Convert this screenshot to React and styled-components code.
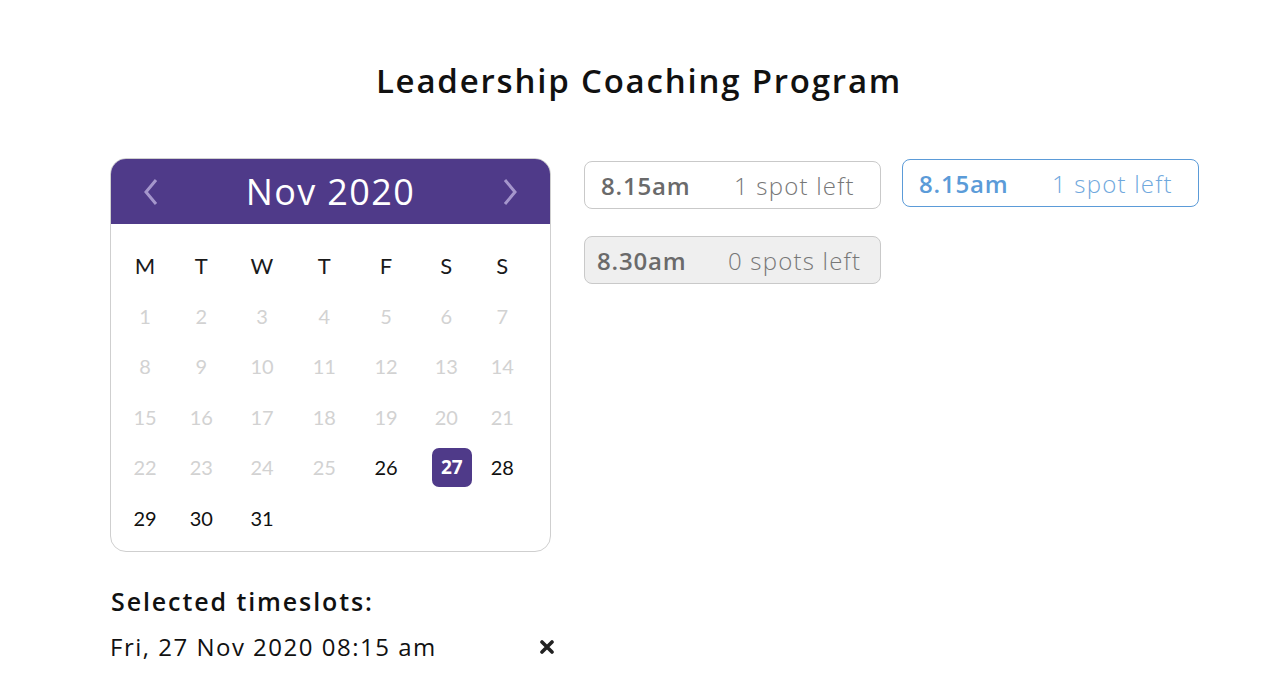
import React from 'react';
import styled, { createGlobalStyle } from 'styled-components';

const GlobalStyle = createGlobalStyle`
  body {
    margin: 0;
    background: #ffffff;
    font-family: 'Open Sans', 'Liberation Sans', sans-serif;
  }
`;

const Page = styled.main`
  width: 1271px;
  height: 696px;
  box-sizing: border-box;
  padding: 58px 0 0 110px;
`;

const Title = styled.h1`
  margin: 0 0 54px 0;
  width: 1058px;
  text-align: center;
  font-family: 'Open Sans', sans-serif;
  font-weight: 600;
  font-size: 33px;
  line-height: 46px;
  color: #111;
  letter-spacing: 1.8px;
`;

const Body = styled.div`
  display: flex;
  align-items: flex-start;
  column-gap: 33px;
`;

const LeftCol = styled.div`
  display: flex;
  flex-direction: column;
  width: 441px;
`;

const Calendar = styled.section`
  width: 441px;
  box-sizing: border-box;
  border: 1px solid #cfcfcf;
  border-radius: 16px;
  overflow: hidden;
  padding-bottom: 8px;
`;

const CalHeader = styled.header`
  display: flex;
  align-items: center;
  justify-content: space-between;
  height: 65px;
  padding: 0 30px;
  background: #4f3a89;
  color: #fff;
`;

const MonthLabel = styled.span`
  font-family: 'Open Sans', sans-serif;
  font-weight: 500;
  font-size: 36px;
  letter-spacing: 1.4px;
`;

const Chevron = styled.svg`
  width: 20px;
  height: 32px;
  stroke: #a596cc;
  stroke-width: 3;
  fill: none;
`;

const Grid = styled.div`
  display: grid;
  grid-template-columns: 54px 58.5px 63px 61.5px 62px 58.5px 53.5px;
  grid-auto-rows: 50.5px;
  padding: 16px 0 0 7px;
`;

const Cell = styled.div`
  display: flex;
  align-items: center;
  justify-content: center;
  font-family: 'Lato', sans-serif;
  font-size: ${p => (p.$head ? '22px' : '20px')};
  font-weight: 400;
  color: ${p => (p.$head ? '#1a1a1a' : p.$active ? '#111' : '#d2d2d2')};
`;

const Selected = styled.span`
  display: flex;
  align-items: center;
  justify-content: center;
  width: 40px;
  height: 39px;
  margin-left: 11px;
  border-radius: 7px;
  background: #4f3a89;
  color: #fff;
  font-family: 'Open Sans', sans-serif;
  font-size: 19px;
  font-weight: 700;
`;

const Slots = styled.div`
  display: grid;
  grid-template-columns: 297px 297px;
  column-gap: 21px;
  row-gap: 27px;
  padding-top: 3px;
`;

const Slot = styled.button`
  display: flex;
  align-items: center;
  height: 48px;
  box-sizing: border-box;
  padding: 0 0 0 ${p => (p.$full ? '12px' : '16px')};
  border-radius: 8px;
  border: 1.5px solid ${p => (p.$picked ? '#5b9bd8' : '#c9c9c9')};
  background: ${p => (p.$full ? '#efefef' : '#fff')};
  font-family: 'Open Sans', sans-serif;
  font-size: 24px;
  cursor: pointer;
  margin-top: ${p => (p.$picked ? '-2px' : '0')};
`;

const Time = styled.span`
  font-weight: 600;
  letter-spacing: 0.8px;
  color: ${p => (p.$picked ? '#5b9bd8' : '#6a6a6a')};
  width: ${p => (p.$full ? '131px' : '133px')};
  text-align: left;
`;

const Spots = styled.span`
  font-weight: 300;
  letter-spacing: 1.2px;
  color: ${p => (p.$picked ? '#6fa8dd' : '#777')};
`;

const SummaryTitle = styled.h2`
  margin: 33px 0 0 1px;
  font-family: 'Open Sans', sans-serif;
  font-weight: 600;
  font-size: 25px;
  line-height: 32px;
  letter-spacing: 1.9px;
  color: #111;
`;

const SummaryRow = styled.div`
  display: flex;
  align-items: center;
  justify-content: space-between;
  margin-top: 15px;
  width: 444px;
  font-family: 'Open Sans', sans-serif;
  font-size: 24px;
  line-height: 30px;
  letter-spacing: 1.5px;
  color: #111;
`;

const Remove = styled.svg`
  width: 14px;
  height: 14px;
  stroke: #222;
  stroke-width: 3.6;
  stroke-linecap: round;
`;

const heads = ['M', 'T', 'W', 'T', 'F', 'S', 'S'];
const days = Array.from({ length: 31 }, (_, i) => i + 1);

export default function App() {
  return (
    <Page>
      <GlobalStyle />
      <Title>Leadership Coaching Program</Title>
      <Body>
        <LeftCol>
          <Calendar>
            <CalHeader>
              <Chevron viewBox="0 0 20 32"><path d="M15 4 L5 16 L15 28" /></Chevron>
              <MonthLabel>Nov 2020</MonthLabel>
              <Chevron viewBox="0 0 20 32"><path d="M5 4 L15 16 L5 28" /></Chevron>
            </CalHeader>
            <Grid>
              {heads.map((h, i) => (
                <Cell key={'h' + i} $head>{h}</Cell>
              ))}
              {days.map(d => (
                <Cell key={d} $active={d >= 26}>
                  {d === 27 ? <Selected>{d}</Selected> : d}
                </Cell>
              ))}
            </Grid>
          </Calendar>
          <SummaryTitle>Selected timeslots:</SummaryTitle>
          <SummaryRow>
            <span>Fri, 27 Nov 2020 08:15 am</span>
            <Remove viewBox="0 0 14 14"><path d="M2 2 L12 12 M12 2 L2 12" /></Remove>
          </SummaryRow>
        </LeftCol>
        <Slots>
          <Slot>
            <Time>8.15am</Time>
            <Spots>1 spot left</Spots>
          </Slot>
          <Slot $picked>
            <Time $picked>8.15am</Time>
            <Spots $picked>1 spot left</Spots>
          </Slot>
          <Slot $full>
            <Time $full>8.30am</Time>
            <Spots>0 spots left</Spots>
          </Slot>
        </Slots>
      </Body>
    </Page>
  );
}
